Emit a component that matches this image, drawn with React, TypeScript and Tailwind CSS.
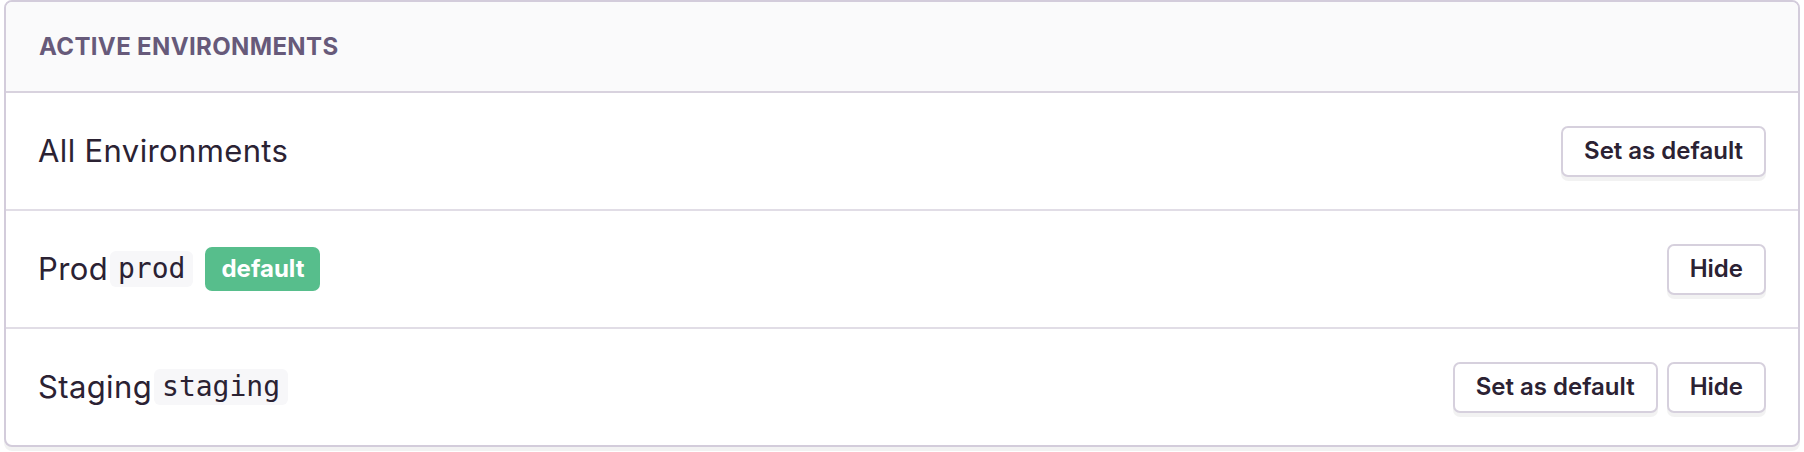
import React from "react";

type Env = { name: string; slug?: string; isDefault?: boolean; canDefault: boolean; canHide: boolean };

const envs: Env[] = [
  { name: "All Environments", canDefault: true, canHide: false },
  { name: "Prod", slug: "prod", isDefault: true, canDefault: false, canHide: true },
  { name: "Staging", slug: "staging", canDefault: true, canHide: true },
];

function Button({ children }: { children: React.ReactNode }) {
  return (
    <button className="h-[51px] px-[21px] rounded-[7px] border-2 border-[#d6d0dd] bg-white text-[24px] font-semibold text-[#2b2233] shadow-[0_4px_0_rgba(0,0,0,0.05)] leading-none">
      {children}
    </button>
  );
}

export default function App() {
  return (
    <div className="bg-white w-[1804px] h-[452px] font-['Inter',sans-serif]">
      <div className="mx-[4px] rounded-[8px] border-2 border-[#d3ccdb] bg-white overflow-hidden shadow-[0_4px_0_rgba(0,0,0,0.05)]">
        <div className="h-[91px] flex items-center px-[33px] bg-[#fafafb] border-b-2 border-[#d8d2de]">
          <h3 className="text-[24px] font-bold uppercase text-[#675a7a] tracking-[0.015em]">Active Environments</h3>
        </div>
        {envs.map((env, i) => (
          <div
            key={env.name}
            className={`flex items-center justify-between px-[32px] ${i < envs.length - 1 ? "h-[118px] border-b-2 border-[#e1dde6]" : "h-[116px]"}`}
          >
            <div className="flex items-center text-[31px] tracking-[0.012em] text-[#2b2233]">
              <span>{env.name}</span>
              {env.slug && (
                <code className="ml-[2px] px-[8px] h-[36px] leading-[36px] rounded-[6px] bg-[#f7f7f9] text-[28px] tracking-normal font-['DejaVu_Sans_Mono',monospace] text-[#2b2233]">
                  {env.slug}
                </code>
              )}
              {env.isDefault && (
                <span className="ml-[12px] h-[44px] px-[16px] flex items-center rounded-[7px] bg-[#57be8c] text-white text-[24px] tracking-normal font-bold">
                  default
                </span>
              )}
            </div>
            <div className="flex gap-[9px]">
              {env.canDefault && <Button>Set as default</Button>}
              {env.canHide && <Button>Hide</Button>}
            </div>
          </div>
        ))}
      </div>
    </div>
  );
}
